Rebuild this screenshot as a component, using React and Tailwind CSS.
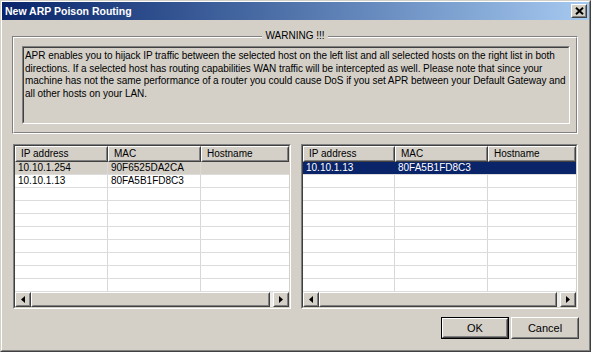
import React from "react";

function Raised({ className = "", innerClassName = "", children }) {
  return (
    <div className={"border border-t-white border-l-white border-r-[#404040] border-b-[#404040] " + className}>
      <div className={"h-full w-full border border-t-[#d4d0c8] border-l-[#d4d0c8] border-r-[#808080] border-b-[#808080] " + innerClassName}>
        {children}
      </div>
    </div>
  );
}

function Sunken({ className = "", innerClassName = "", children }) {
  return (
    <div className={"border border-t-[#808080] border-l-[#808080] border-r-white border-b-white " + className}>
      <div className={"h-full w-full border border-t-[#404040] border-l-[#404040] border-r-[#d4d0c8] border-b-[#d4d0c8] " + innerClassName}>
        {children}
      </div>
    </div>
  );
}

function ArrowBtn({ dir }) {
  return (
    <Raised className="w-[16px] h-[15px] shrink-0 bg-[#d4d0c8]" innerClassName="flex items-center justify-center">
      <svg width="4" height="7" viewBox="0 0 4 7">
        {dir === "left" ? (
          <polygon points="4,0 0,3.5 4,7" fill="#000" />
        ) : (
          <polygon points="0,0 4,3.5 0,7" fill="#000" />
        )}
      </svg>
    </Raised>
  );
}

function HeaderCell({ label, width }) {
  return (
    <div style={width ? { width } : undefined} className={width ? "flex shrink-0" : "flex flex-1"}>
      <Raised className="h-full w-full bg-[#d4d0c8]" innerClassName="flex items-center pl-[4px] leading-none whitespace-nowrap">
        {label}
      </Raised>
    </div>
  );
}

function HostList({ widths, rows, focused }) {
  const empty = Array.from({ length: 10 - rows.length }, () => ["", ""]);
  const all = [...rows, ...empty];
  return (
    <Sunken className="h-[165px] bg-white" innerClassName="flex flex-col bg-white overflow-hidden">
      <div className="flex h-[16px] shrink-0">
        <HeaderCell label="IP address" width={widths[0]} />
        <HeaderCell label="MAC" width={widths[1]} />
        <HeaderCell label="Hostname" />
      </div>
      <div className="flex flex-col">
        {all.map((r, ri) => {
          const isSel = ri === 0;
          const bg = isSel ? (focused ? "bg-[#0a246a] text-white" : "bg-[#d4d0c8]") : "bg-white";
          const div = focused && isSel ? "border-r border-[#0a246a]" : "border-r border-[#d8d8d8]";
          return (
            <div key={ri} className={"flex h-[13px] border-b border-[#dcdcdc] " + bg}>
              <div style={{ width: widths[0] }} className={"shrink-0 pl-[3px] leading-[12px] whitespace-nowrap " + div}>
                {r[0]}
              </div>
              <div style={{ width: widths[1] }} className={"shrink-0 pl-[3px] leading-[12px] whitespace-nowrap " + div}>
                {r[1]}
              </div>
              <div className="flex-1" />
            </div>
          );
        })}
      </div>
      <div className="flex h-[15px] shrink-0 bg-[#ecebe7]">
        <ArrowBtn dir="left" />
        <Raised className="flex-1 h-full bg-[#d4d0c8] mr-[3px]" />
        <ArrowBtn dir="right" />
      </div>
    </Sunken>
  );
}

export default function App() {
  return (
    <div
      className="w-[591px] h-[352px] bg-[#d4d0c8] border border-t-[#d4d0c8] border-l-[#d4d0c8] border-r-[#404040] border-b-[#404040] text-[10px] text-black"
      style={{ fontFamily: '"Liberation Sans", Arial, sans-serif' }}
    >
      <div className="h-full w-full border border-t-white border-l-white border-r-[#808080] border-b-[#808080] flex flex-col">
        {/* Title bar */}
        <div className="h-[18px] shrink-0 flex items-center justify-between pl-[3px] pr-[2px] bg-gradient-to-r from-[#0a246a] to-[#a6caf0]">
          <span className="text-white font-bold text-[10.5px] leading-none">New ARP Poison Routing</span>
          <Raised className="w-[16px] h-[14px] bg-[#d4d0c8]" innerClassName="flex items-center justify-center">
            <svg width="9" height="8" viewBox="0 0 9 8">
              <path d="M1 0.8 L8 7.2 M8 0.8 L1 7.2" stroke="#000" strokeWidth="2" />
            </svg>
          </Raised>
        </div>

        {/* Warning group */}
        <div className="relative ml-[10px] mt-[16px] w-[566px] h-[98px] border border-t-[#808080] border-l-[#808080] border-r-white border-b-white shrink-0">
          <div className="h-full w-full border border-t-white border-l-white border-r-[#808080] border-b-[#808080] pl-[8px] pt-[8px]">
            <Sunken className="w-[548px] h-[78px]" innerClassName="bg-[#d4d0c8] pl-[1px] pt-[2px]">
              <div className="leading-[12.5px] whitespace-nowrap tracking-[-0.05px]">
                <div>APR enables you to hijack IP traffic between the selected host on the left list and all selected hosts on the right list in both</div>
                <div>directions. If a selected host has routing capabilities WAN traffic will be intercepted as well. Please note that since your</div>
                <div>machine has not the same performance of a router you could cause DoS if you set APR between your Default Gateway and</div>
                <div>all other hosts on your LAN.</div>
              </div>
            </Sunken>
          </div>
          <div className="absolute left-0 right-0 -top-[7px] flex justify-center">
            <span className="bg-[#d4d0c8] px-[3px] leading-[12px]">WARNING !!!</span>
          </div>
        </div>

        {/* Lists */}
        <div className="flex ml-[11px] mt-[10px] gap-[10px] shrink-0">
          <div className="w-[278px]">
            <HostList
              widths={[93, 93]}
              rows={[["10.10.1.254", "90F6525DA2CA"], ["10.10.1.13", "80FA5B1FD8C3"]]}
              focused={false}
            />
          </div>
          <div className="w-[277px]">
            <HostList widths={[92, 93]} rows={[["10.10.1.13", "80FA5B1FD8C3"]]} focused={true} />
          </div>
        </div>

        {/* Buttons */}
        <div className="flex justify-end gap-[2px] pr-[10px] mt-[8px]">
          <div className="w-[68px] h-[22px] border border-black">
            <Raised className="h-full w-full bg-[#d4d0c8]" innerClassName="flex items-center justify-center text-[11px]">
              OK
            </Raised>
          </div>
          <Raised className="w-[68px] h-[22px] bg-[#d4d0c8]" innerClassName="flex items-center justify-center text-[11px]">
            Cancel
          </Raised>
        </div>
      </div>
    </div>
  );
}
